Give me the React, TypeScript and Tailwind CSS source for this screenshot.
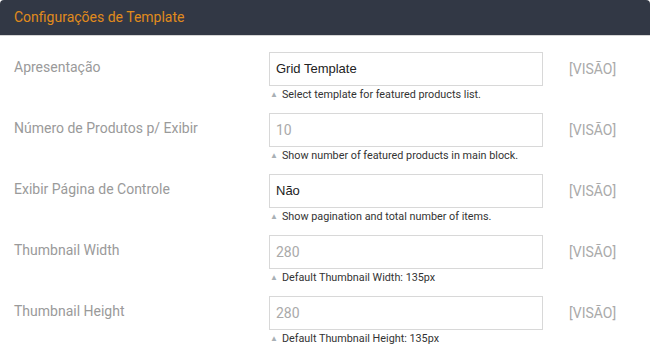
import React from "react";

const rows = [
  { label: "Apresentação", value: "Grid Template", strong: true, hint: "Select template for featured products list." },
  { label: "Número de Produtos p/ Exibir", value: "10", strong: false, hint: "Show number of featured products in main block." },
  { label: "Exibir Página de Controle", value: "Não", strong: true, hint: "Show pagination and total number of items." },
  { label: "Thumbnail Width", value: "280", strong: false, hint: "Default Thumbnail Width: 135px" },
  { label: "Thumbnail Height", value: "280", strong: false, hint: "Default Thumbnail Height: 135px" },
];

export default function App() {
  return (
    <div className="w-[650px] h-[358px] bg-white overflow-hidden" style={{ fontFamily: "Roboto, 'Liberation Sans', sans-serif" }}>
      <div className="h-[36px] bg-[#323845] rounded-t-[4px] border-b border-[#d5d5d5] flex items-center pl-[14px]">
        <span className="text-[14px] text-[#e08b1c]">Configurações de Template</span>
      </div>
      <div className="pt-[16px] flex flex-col gap-[10px]">
        {rows.map((r) => (
          <div key={r.label} className="flex items-start">
            <div className="w-[269px] pl-[14px] pt-[5px] text-[14px] leading-[20px] text-[#9a9a9a]">{r.label}</div>
            <div className="w-[274px] flex flex-col">
              <div className="h-[34px] border border-[#d8d8d8] bg-white flex items-center pl-[6px]">
                {r.strong ? (
                  <span className="text-[#222222] text-[13px]" style={{ fontFamily: "'Liberation Sans', Arial, sans-serif" }}>{r.value}</span>
                ) : (
                  <span className="text-[#aaaaaa] text-[14px]">{r.value}</span>
                )}
              </div>
              <div className="mt-[1px] h-[16px] flex items-center text-[10.8px] text-[#333333] leading-[16px]">
                <span className="text-[#a8b0b5] text-[8px] mr-[4px] ml-[1px]">▲</span>
                <span>{r.hint}</span>
              </div>
            </div>
            <div className="ml-[26px] h-[34px] flex items-center text-[14px] text-[#aaaaaa]">[VISÃO]</div>
          </div>
        ))}
      </div>
    </div>
  );
}
